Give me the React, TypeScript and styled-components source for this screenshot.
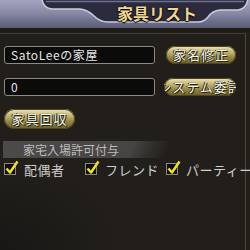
import React from "react";
import styled, { createGlobalStyle } from "styled-components";

const Global = createGlobalStyle`
  html, body {
    margin: 0;
    padding: 0;
    width: 250px;
    height: 250px;
    overflow: hidden;
    background: #211f1b;
  }
  * { box-sizing: border-box; }
`;

const jp = `"Noto Sans CJK JP", "DejaVu Sans", sans-serif`;

const Window = styled.div`
  width: 250px;
  height: 250px;
  display: flex;
  flex-direction: column;
  background:
    radial-gradient(ellipse 120px 90px at 0px 250px, #181715 0%, rgba(24,23,21,0) 100%),
    #221f1b;
  font-family: ${jp};
`;

const Header = styled.div`
  position: relative;
  height: 28px;
  background: linear-gradient(180deg, #a3a5c0 0%, #8587a3 50%, #595b74 100%);
  flex-shrink: 0;
`;

const HeaderShape = styled.svg`
  position: absolute;
  left: 0;
  top: 0;
`;

const Title = styled.div`
  position: absolute;
  left: 0;
  right: 0;
  top: 4px;
  padding-left: 64px;
  text-align: center;
  font-size: 16px;
  font-weight: bold;
  line-height: 18px;
  color: #f1d68e;
  text-shadow: 0 1px 1px #000, 0 0 2px #000;
`;

const Strip = styled.div`
  height: 4px;
  background: #1e1d15;
  flex-shrink: 0;
`;

const Panel = styled.div`
  flex: 1;
  margin-top: 1px;
  margin-right: 4px;
  border-top: 1px solid #3b3a33;
  border-right: 1px solid #4b4a42;
  padding: 12px 0 0 4px;
  display: flex;
  flex-direction: column;
`;

const Row = styled.div<{ $gap?: number }>`
  display: flex;
  align-items: center;
  height: 18px;
  margin-bottom: ${(p) => p.$gap ?? 14}px;
`;

const Field = styled.div`
  width: 151px;
  height: 18px;
  border: 1px solid #8b8a86;
  border-radius: 3px;
  background: #0b0b0a;
  color: #e6e6e6;
  font-size: 12px;
  line-height: 16px;
  padding-left: 6px;
  letter-spacing: 0.6px;
  white-space: nowrap;
  overflow: hidden;
`;

const GoldButton = styled.div<{ $w: number; $h?: number; $ml?: number }>`
  width: ${(p) => p.$w}px;
  height: ${(p) => p.$h ?? 18}px;
  margin-left: ${(p) => p.$ml ?? 0}px;
  flex-shrink: 0;
  display: flex;
  justify-content: center;
  border-radius: 10px;
  background: linear-gradient(180deg, #efe7bd 0%, #c9bb7c 30%, #92843f 65%, #6b5f27 100%);
  box-shadow: inset 0 0 0 1px #4c4320;
  color: #fbfaf2;
  font-size: 13px;
  line-height: ${(p) => p.$h ?? 18}px;
  letter-spacing: 1px;
  white-space: nowrap;
  overflow: hidden;
  text-shadow: 0 0 1px #000, 1px 1px 0 #2a250e, -1px 0 0 #2a250e;
`;

const ButtonText = styled.span`
  flex-shrink: 0;
`;

const Section = styled.div`
  margin-top: 13px;
  margin-left: -1px;
  height: 17px;
  width: 180px;
  background: linear-gradient(115deg, #4d4b4a 0%, #474544 70%, rgba(60,58,56,0.6) 80%, rgba(34,31,27,0) 90%);
  color: #bdbcbc;
  font-size: 12px;
  line-height: 17px;
  padding-left: 20px;
`;

const Checks = styled.div`
  display: flex;
  align-items: center;
  height: 18px;
  margin-top: 2px;
  white-space: nowrap;
`;

const CheckItem = styled.div<{ $w: number }>`
  display: flex;
  align-items: center;
  width: ${(p) => p.$w}px;
  flex-shrink: 0;
`;

const Box = styled.div`
  position: relative;
  width: 12px;
  height: 12px;
  border: 1px solid #8a8a80;
  background: #0e0e0c;
  flex-shrink: 0;
`;

const Tick = styled.svg`
  position: absolute;
  left: 0px;
  top: -4px;
`;

const Label = styled.span`
  margin-left: 8px;
  color: #cfcfcf;
  font-size: 13px;
  letter-spacing: 0.5px;
`;

function Check({ label, w }: { label: string; w: number }) {
  return (
    <CheckItem $w={w}>
      <Box>
        <Tick width="14" height="15" viewBox="0 0 14 15">
          <path d="M1.5 8.5 L5 12.5 L12.5 1.5" fill="none" stroke="#f2e51c" strokeWidth="2.4" strokeLinejoin="round" />
        </Tick>
      </Box>
      <Label>{label}</Label>
    </CheckItem>
  );
}

export default function App() {
  return (
    <Window>
      <Global />
      <Header>
        <HeaderShape width="250" height="28" viewBox="0 0 250 28">
          <path
            d="M42 -1 Q43 8 52 9 L80 9 Q88 10 94 16 Q100 22 108 22 L198 22 Q204 22 208 17 Q212 11 220 10 L238 10 Q246 9 248 -1 Z"
            fill="#2b2b3d"
            stroke="#c9cbe0"
            strokeWidth="1.5"
          />
          <path d="M46 1.5 L244 1.5" stroke="#6e7090" strokeWidth="1.5" />
        </HeaderShape>
        <Title>家具リスト</Title>
      </Header>
      <Strip />
      <Panel>
        <Row>
          <Field>SatoLeeの家屋</Field>
          <GoldButton $w={70} $ml={11}>
            <ButtonText>家名修正</ButtonText>
          </GoldButton>
        </Row>
        <Row>
          <Field>0</Field>
          <GoldButton $w={72} $ml={9}>
            <ButtonText>システム委託</ButtonText>
          </GoldButton>
        </Row>
        <Row $gap={0}>
          <GoldButton $w={71} $h={20}>
            <ButtonText>家具回収</ButtonText>
          </GoldButton>
        </Row>
        <Section>家宅入場許可付与</Section>
        <Checks>
          <Check label="配偶者" w={81} />
          <Check label="フレンド" w={81} />
          <Check label="パーティー" w={90} />
        </Checks>
      </Panel>
    </Window>
  );
}
